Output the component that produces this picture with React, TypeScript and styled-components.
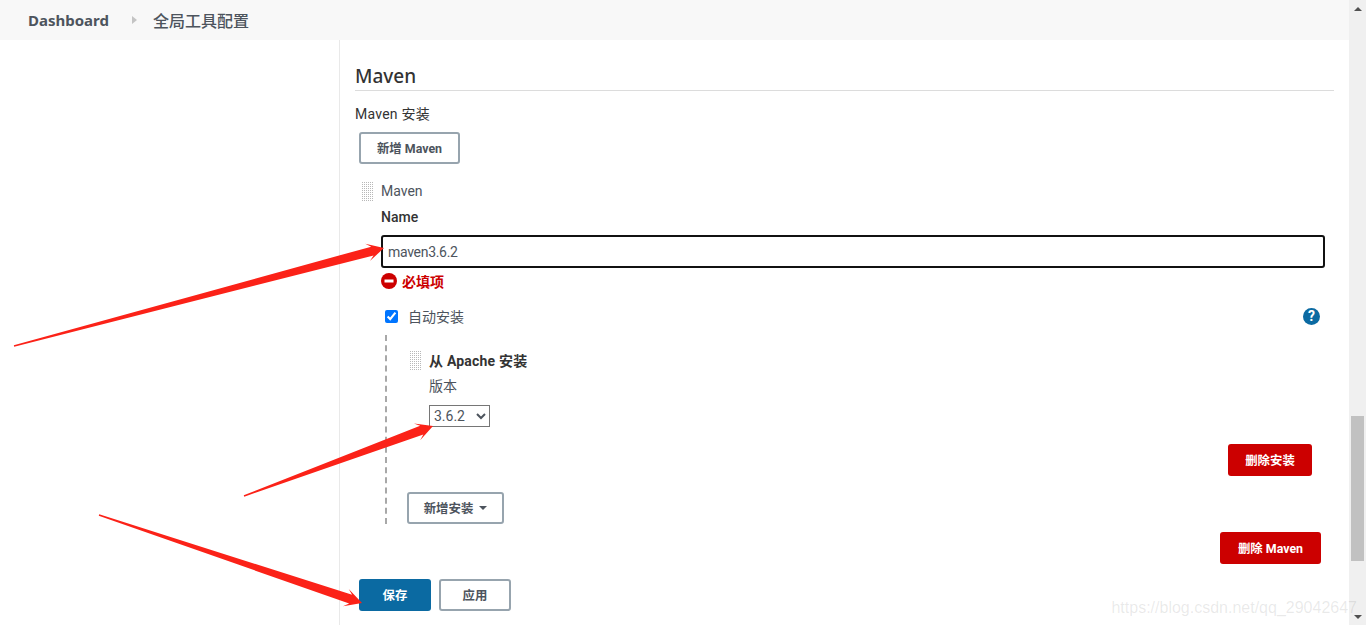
import styled, { createGlobalStyle } from "styled-components";

const GlobalStyle = createGlobalStyle`
  html, body {
    margin: 0;
    height: 625px;
    overflow: hidden;
    background: #fff;
  }
  body {
    font-family: Roboto, "Noto Sans CJK SC", "Liberation Sans", sans-serif;
    font-size: 14px;
    color: #333;
  }
`;

const Page = styled.div`
  position: relative;
  display: flex;
  width: 1366px;
  height: 625px;
  overflow: hidden;
`;

const Main = styled.div`
  flex: 1;
  min-width: 0;
  display: flex;
  flex-direction: column;
`;

const Breadcrumbs = styled.div`
  height: 40px;
  flex: none;
  display: flex;
  align-items: center;
  padding-left: 28px;
  background: #f8f8f8;
  color: #4d545d;
  font-family: "Noto Sans", "Noto Sans CJK SC", sans-serif;
`;

const Crumb = styled.span`
  font-size: 15px;
  font-weight: 700;
`;

const CrumbArrow = styled.span`
  width: 0;
  height: 0;
  margin: 0 16px 0 23px;
  border-left: 5px solid #c4c4c4;
  border-top: 4px solid transparent;
  border-bottom: 4px solid transparent;
`;

const CrumbPage = styled.span`
  font-size: 16px;
  font-weight: 500;
`;

const Body = styled.div`
  flex: 1;
  display: flex;
  min-height: 0;
`;

const SidePanel = styled.div`
  width: 339px;
  flex: none;
  border-right: 1px solid #e9e9e9;
`;

const Content = styled.div`
  flex: 1;
  min-width: 0;
  padding: 24px 15px 0 15px;
`;

const SectionTitle = styled.h2`
  margin: 0;
  height: 26px;
  font-family: "Noto Sans", sans-serif;
  font-size: 19px;
  line-height: 25px;
  font-weight: 500;
  color: #333;
  border-bottom: 1px solid #dcdcdc;
`;

const FieldLabel = styled.div`
  margin-top: 14px;
  height: 18px;
  line-height: 18px;
  letter-spacing: 0.25px;
  color: #333;
`;

const OutlineButton = styled.button<{ $w: number }>`
  display: flex;
  align-items: center;
  justify-content: center;
  gap: 6px;
  width: ${(p) => p.$w}px;
  height: 32px;
  padding: 0;
  background: #fff;
  border: 2px solid #97a4ae;
  border-radius: 3px;
  color: #4d545d;
  font-family: inherit;
  font-size: 12.4px;
  font-weight: 700;
`;

const AddMaven = styled(OutlineButton)`
  margin: 9px 0 0 4px;
`;

const DragRow = styled.div<{ $top: number; $left: number }>`
  display: flex;
  align-items: center;
  gap: 8px;
  margin: ${(p) => p.$top}px 0 0 ${(p) => p.$left}px;
  height: 20px;
`;

const DragHandle = styled.span`
  width: 12px;
  height: 20px;
  flex: none;
  background:
    linear-gradient(#fff 50%, transparent 50%) 0 0 / 2px 2px,
    linear-gradient(90deg, #fff 50%, #b8b8b8 50%) 0 0 / 2px 2px;
`;

const RepeatTitle = styled.span`
  color: #4d545d;
`;

const BoldTitle = styled.span`
  font-weight: 700;
  letter-spacing: 0.2px;
  color: #333;
`;

const Indented = styled.div`
  margin-left: 26px;
`;

const NameLabel = styled.div`
  margin-top: 7px;
  height: 18px;
  line-height: 18px;
  font-weight: 500;
  color: #333;
`;

const TextInput = styled.input`
  display: block;
  box-sizing: border-box;
  width: 944px;
  height: 33px;
  margin-top: 9px;
  padding: 0 5px;
  border: 2px solid #111;
  border-radius: 3px;
  outline: none;
  font-family: inherit;
  font-size: 14px;
  letter-spacing: -0.3px;
  color: #4d545d;
`;

const ErrorRow = styled.div`
  display: flex;
  align-items: center;
  gap: 5px;
  height: 20px;
  margin-top: 3px;
  color: #c00;
  font-weight: 700;
`;

const CheckRow = styled.div`
  display: flex;
  align-items: center;
  height: 20px;
  margin: 15px 14px 0 4px;
  color: #4d545d;
`;

const CheckBox = styled.input`
  width: 13px;
  height: 13px;
  margin: 0 10px 0 0;
  accent-color: #0075ff;
`;

const HelpIcon = styled.span`
  margin-left: auto;
  width: 17px;
  height: 17px;
  border-radius: 50%;
  background: #0b6aa2;
  color: #fff;
  font-size: 14px;
  font-weight: 700;
  line-height: 17px;
  text-align: center;
`;

const Dropin = styled.div`
  box-sizing: border-box;
  margin: 9px 15px 0 4px;
  height: 189px;
  padding: 15px 0 0 20px;
  border-left: 2px dashed #a8a8a8;
`;

const VersionBlock = styled.div`
  margin-left: 3px;
`;

const VersionLabel = styled.div`
  margin: 7px 0 0 19px;
  height: 18px;
  line-height: 18px;
  color: #4d545d;
`;

const VersionSelect = styled.select`
  display: block;
  box-sizing: border-box;
  width: 61px;
  height: 22px;
  margin: 10px 0 0 19px;
  padding: 0;
  background: #fff;
  border: 1px solid #767676;
  border-radius: 0;
  font-family: inherit;
  font-size: 14px;
  color: #4d545d;
`;

const RightRow = styled.div<{ $top: number; $right: number }>`
  display: flex;
  justify-content: flex-end;
  margin: ${(p) => p.$top}px ${(p) => p.$right}px 0 0;
`;

const DangerButton = styled.button<{ $w: number }>`
  width: ${(p) => p.$w}px;
  height: 32px;
  padding: 0;
  background: #c00;
  border: none;
  border-radius: 3px;
  color: #fff;
  font-family: inherit;
  font-size: 12.4px;
  font-weight: 700;
`;

const AddInstall = styled(OutlineButton)`
  margin-top: 16px;
`;

const Caret = styled.span`
  width: 0;
  height: 0;
  border-left: 4px solid transparent;
  border-right: 4px solid transparent;
  border-top: 4px solid #4d545d;
`;

const Actions = styled.div`
  display: flex;
  gap: 8px;
  margin: 15px 0 0 4px;
`;

const SaveButton = styled.button`
  width: 72px;
  height: 32px;
  padding: 0;
  background: #0b6aa2;
  border: none;
  border-radius: 3px;
  color: #fff;
  font-family: inherit;
  font-size: 12.4px;
  font-weight: 700;
`;

const Scrollbar = styled.div`
  width: 17px;
  flex: none;
  display: flex;
  flex-direction: column;
  align-items: center;
  background: #f0f0f0;
`;

const ScrollEnd = styled.div<{ $up?: boolean }>`
  width: 0;
  height: 0;
  flex: none;
  margin: ${(p) => (p.$up ? "7px 0 0" : "0 0 6px")};
  border-left: 4px solid transparent;
  border-right: 4px solid transparent;
  border-${(p) => (p.$up ? "bottom" : "top")}: 4px solid #505050;
`;

const ScrollTrack = styled.div`
  flex: 1;
  width: 100%;
  display: flex;
  flex-direction: column;
`;

const ScrollThumb = styled.div`
  width: 13px;
  height: 145px;
  margin: 405px auto 0;
  background: #c1c1c1;
`;

const Overlay = styled.svg`
  position: absolute;
  inset: 0;
  width: 1366px;
  height: 625px;
  pointer-events: none;
`;

const Watermark = styled.div`
  position: absolute;
  right: 9px;
  bottom: 8px;
  font-family: "Liberation Sans", sans-serif;
  font-size: 16px;
  color: rgba(120, 120, 120, 0.16);
  white-space: nowrap;
`;

// tail -> tip, a thin tail that widens up to a barbed head
const arrowPoints = (x1: number, y1: number, x2: number, y2: number) => {
  const len = Math.hypot(x2 - x1, y2 - y1);
  const ux = (x2 - x1) / len;
  const uy = (y2 - y1) / len;
  const at = (along: number, side: number) =>
    `${x2 - ux * along - uy * side},${y2 - uy * along + ux * side}`;
  return [
    at(len, 0.7),
    at(12, 4.6),
    at(17, 9),
    at(0, 0),
    at(17, -9),
    at(12, -4.6),
    at(len, -0.7),
  ].join(" ");
};

const arrows = [
  [14, 346, 384, 248],
  [244, 496, 433, 426],
  [99, 515, 362, 603],
];

export default function App() {
  return (
    <>
      <GlobalStyle />
      <Page>
        <Main>
          <Breadcrumbs>
            <Crumb>Dashboard</Crumb>
            <CrumbArrow />
            <CrumbPage>全局工具配置</CrumbPage>
          </Breadcrumbs>
          <Body>
            <SidePanel />
            <Content>
              <SectionTitle>Maven</SectionTitle>
              <FieldLabel>Maven 安装</FieldLabel>
              <AddMaven $w={101}>新增 Maven</AddMaven>
              <DragRow $top={17} $left={6}>
                <DragHandle />
                <RepeatTitle>Maven</RepeatTitle>
              </DragRow>
              <Indented>
                <NameLabel>Name</NameLabel>
                <TextInput defaultValue="maven3.6.2" />
                <ErrorRow>
                  <svg width="16" height="16" viewBox="0 0 16 16">
                    <circle cx="8" cy="8" r="8" fill="#c00" />
                    <rect x="3.5" y="6.5" width="9" height="3" fill="#fff" />
                  </svg>
                  必填项
                </ErrorRow>
                <CheckRow>
                  <CheckBox type="checkbox" defaultChecked />
                  自动安装
                  <HelpIcon>?</HelpIcon>
                </CheckRow>
                <Dropin>
                  <VersionBlock>
                    <DragRow $top={0} $left={-1}>
                      <DragHandle />
                      <BoldTitle>从 Apache 安装</BoldTitle>
                    </DragRow>
                    <VersionLabel>版本</VersionLabel>
                    <VersionSelect defaultValue="3.6.2">
                      <option>3.6.2</option>
                    </VersionSelect>
                  </VersionBlock>
                  <RightRow $top={17} $right={7}>
                    <DangerButton $w={84}>删除安装</DangerButton>
                  </RightRow>
                  <AddInstall $w={97}>
                    新增安装
                    <Caret />
                  </AddInstall>
                </Dropin>
              </Indented>
              <RightRow $top={8} $right={13}>
                <DangerButton $w={101}>删除 Maven</DangerButton>
              </RightRow>
              <Actions>
                <SaveButton>保存</SaveButton>
                <OutlineButton $w={72}>应用</OutlineButton>
              </Actions>
            </Content>
          </Body>
        </Main>
        <Scrollbar>
          <ScrollEnd $up />
          <ScrollTrack>
            <ScrollThumb />
          </ScrollTrack>
          <ScrollEnd />
        </Scrollbar>
        <Overlay viewBox="0 0 1366 625">
          {arrows.map(([x1, y1, x2, y2]) => (
            <polygon key={x1} points={arrowPoints(x1, y1, x2, y2)} fill="#fb2218" />
          ))}
        </Overlay>
        <Watermark>https://blog.csdn.net/qq_29042647</Watermark>
      </Page>
    </>
  );
}
